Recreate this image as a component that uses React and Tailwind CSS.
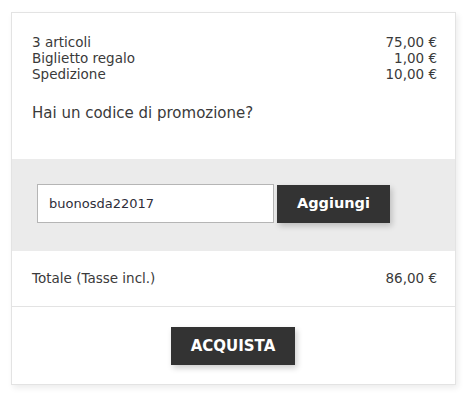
import React, { useState } from 'react';

const rows = [
  { label: '3 articoli', value: '75,00 €' },
  { label: 'Biglietto regalo', value: '1,00 €' },
  { label: 'Spedizione', value: '10,00 €' },
];

export default function App() {
  const [code, setCode] = useState('buonosda22017');

  return (
    <div className="min-h-[403px] w-[468px] bg-white pl-[11px] pt-[12px] text-[#3a3a3a]" style={{ fontFamily: '"DejaVu Sans", "Open Sans", sans-serif' }}>
      <div className="w-[445px] border border-[#e3e3e3] bg-white shadow-[2px_3px_6px_rgba(0,0,0,0.08)]">
        <div className="pl-5 pr-[18px] pt-[21px] pb-[36px]">
          <div className="text-[13.5px] leading-4">
            {rows.map((r) => (
              <div key={r.label} className="flex justify-between">
                <span>{r.label}</span>
                <span>{r.value}</span>
              </div>
            ))}
          </div>
          <p className="mt-[21px] text-[15px] leading-5">Hai un codice di promozione?</p>
        </div>

        <div className="flex items-center gap-[3px] bg-[#ebebeb] pl-[25px] pt-[25px] pb-[28px]">
          <input
            value={code}
            onChange={(e) => setCode(e.target.value)}
            className="h-[39px] w-[237px] border border-[#b5b5b5] bg-white px-[11px] text-[13px] text-[#2e2e3a] outline-none"
          />
          <button className="h-[38px] w-[113px] bg-[#333333] text-[14.5px] font-bold text-white shadow-[2px_3px_6px_rgba(0,0,0,0.2)]">
            Aggiungi
          </button>
        </div>

        <div className="flex h-[56px] items-center justify-between border-b border-[#e3e3e3] pl-5 pr-[18px] text-[13.5px]">
          <span>Totale (Tasse incl.)</span>
          <span>86,00 €</span>
        </div>

        <div className="flex justify-center pt-[20px] pb-[19px]">
          <button className="ml-[-1px] h-[38px] w-[124px] bg-[#333333] text-[15px] font-bold text-white shadow-[2px_3px_6px_rgba(0,0,0,0.2)]">
            ACQUISTA
          </button>
        </div>
      </div>
    </div>
  );
}
